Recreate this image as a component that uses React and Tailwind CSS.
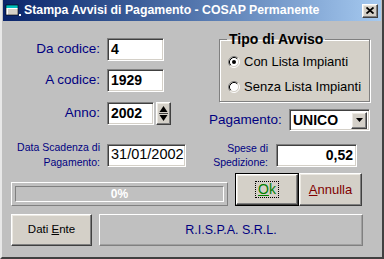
const font = { fontFamily: "'Liberation Sans', Arial, sans-serif" };

const sunken =
  "bg-white border border-t-[#808080] border-l-[#808080] border-b-white border-r-white shadow-[inset_1px_1px_0_#404040,inset_-1px_-1px_0_#d4d0c8]";
const raised =
  "bg-[#d4d0c8] border border-t-white border-l-white border-b-[#404040] border-r-[#404040] shadow-[inset_-1px_-1px_0_#808080,inset_1px_1px_0_#ece9e2]";

const Radio = ({ checked }) => (
  <svg width="12" height="12" viewBox="0 0 12 12" className="shrink-0">
    <circle cx="6" cy="6" r="4.5" fill="white" />
    <path d="M2.11 9.89 A5.5 5.5 0 0 1 9.89 2.11" fill="none" stroke="#808080" />
    <path d="M9.89 2.11 A5.5 5.5 0 0 1 2.11 9.89" fill="none" stroke="#ffffff" />
    <path d="M2.82 9.18 A4.5 4.5 0 0 1 9.18 2.82" fill="none" stroke="#000000" />
    <path d="M9.18 2.82 A4.5 4.5 0 0 1 2.82 9.18" fill="none" stroke="#d4d0c8" />
    {checked && <circle cx="6" cy="6" r="2" fill="black" />}
  </svg>
);

const Field = ({ label, value, width, bold = true }) => (
  <div className="flex items-center h-[23px]">
    <div className="w-[98px] text-right text-[13.5px] text-[#000080]">{label}</div>
    <div
      className={`${sunken} ml-[7px] h-[23px] pl-[3px] flex items-center text-[14px] text-black ${bold ? "font-bold" : ""}`}
      style={{ width }}
    >
      {value}
    </div>
  </div>
);

export default function App() {
  return (
    <div
      className="w-[384px] h-[259px] bg-[#c0c0c0] border-l-2 border-l-[#e8e8e8] border-r-2 border-r-[#404040] border-b-2 border-b-[#404040] flex flex-col overflow-hidden"
      style={font}
    >
      {/* title bar */}
      <div className="mx-[1px] h-[21px] shrink-0 bg-linear-to-r from-[#0a246a] to-[#a6caf0] flex items-center pl-[2px] pr-[3px]">
        <svg width="16" height="13" viewBox="0 0 16 13" className="shrink-0">
          <rect x="1" y="1" width="12" height="10" fill="#ffffff" />
          <rect x="1" y="1" width="12" height="3" fill="#00c0c0" />
          <rect x="3" y="5" width="10" height="6" fill="#d4d0c8" />
          <rect x="1" y="1" width="12" height="10" fill="none" stroke="#000" strokeWidth="0.6" />
          <rect x="14" y="10" width="2" height="2" fill="#ffffff" />
        </svg>
        <span className="ml-[3px] text-white font-bold text-[12.3px] leading-none whitespace-nowrap">
          Stampa Avvisi di Pagamento - COSAP Permanente
        </span>
        <div className={`${raised} ml-auto w-[16px] h-[14px] flex items-center justify-center`}>
          <svg width="8" height="7" viewBox="0 0 8 7">
            <path d="M0.5 0.5 L7.5 6.5 M7.5 0.5 L0.5 6.5" stroke="#000" strokeWidth="1.8" />
          </svg>
        </div>
      </div>

      {/* top section */}
      <div className="flex mt-[10px] items-start">
        <div className="flex flex-col pt-[7px]">
          <Field label="Da codice:" value="4" width={57} />
          <div className="mt-[8px]">
            <Field label="A codice:" value="1929" width={57} />
          </div>
          <div className="mt-[10px] flex items-center">
            <Field label="Anno:" value="2002" width={47} />
            <div className={`${raised} ml-[2px] w-[15px] h-[23px] flex items-center justify-center`}>
              <svg width="11" height="19" viewBox="0 0 11 19">
                <path d="M5.5 2 L9.5 8 L1.5 8 Z" fill="#000" />
                <line x1="1" y1="9.5" x2="10" y2="9.5" stroke="#404040" />
                <path d="M1.5 11 L9.5 11 L5.5 17 Z" fill="#000" />
              </svg>
            </div>
          </div>
        </div>

        <div className="ml-[38px] w-[161px] flex flex-col">
          <fieldset className="ml-[10px] w-[151px] h-[71px] bg-[#d4d0c8] border border-[#808080] shadow-[inset_1px_1px_0_#fff,1px_1px_0_#fff] flex flex-col">
            <legend className="ml-[7px] px-[2px] text-[14px] leading-[16px] font-bold text-black">
              Tipo di Avviso
            </legend>
            <div className="flex items-center h-[18px] mt-[6px] pl-[8px] gap-[4px] text-[13px] text-black">
              <Radio checked />
              <span>Con Lista Impianti</span>
            </div>
            <div className="flex items-center h-[18px] mt-[7px] pl-[8px] gap-[4px] text-[13px] text-black">
              <Radio />
              <span>Senza Lista Impianti</span>
            </div>
          </fieldset>
          <div className="flex items-center mt-[7px]">
            <div className="flex-1 text-[13.5px] text-[#000080]">Pagamento:</div>
            <div className={`${sunken} w-[81px] h-[22px] flex items-center pl-[3px] pr-[2px]`}>
              <span className="flex-1 font-bold text-[14px] text-black">UNICO</span>
              <div className={`${raised} w-[16px] h-[17px] flex items-center justify-center`}>
                <svg width="7" height="4" viewBox="0 0 7 4">
                  <path d="M0 0 L7 0 L3.5 4 Z" fill="#000" />
                </svg>
              </div>
            </div>
          </div>
        </div>
      </div>

      {/* dates row */}
      <div className="flex items-center mt-[9px] h-[30px]">
        <div className="w-[98px] text-right text-[10.5px] leading-[15px] text-[#000080]">
          Data Scadenza di
          <br />
          Pagamento:
        </div>
        <div className={`${sunken} ml-[7px] w-[79px] h-[23px] pl-[3px] flex items-center text-[14.5px] text-black`}>
          31/01/2002
        </div>
        <div className="w-[82px] text-right text-[10.5px] leading-[14px] text-[#000080]">
          Spese di
          <br />
          Spedizione:
        </div>
        <div className={`${sunken} ml-[8px] w-[81px] h-[23px] pr-[3px] flex items-center justify-end font-bold text-[14px] text-black`}>
          0,52
        </div>
      </div>

      {/* progress and buttons */}
      <div className="flex items-end mt-[3px] h-[33px]">
        <div className="ml-[9px] w-[217px] h-[24px] border border-t-white border-l-white border-b-[#808080] border-r-[#808080] p-[3px]">
          <div className="w-full h-full border border-t-[#808080] border-l-[#808080] border-b-white border-r-white flex items-center justify-center text-white font-bold text-[12px]">
            0%
          </div>
        </div>
        <div className="ml-[7px] w-[64px] h-[33px] border border-black">
          <div className={`${raised} w-full h-full flex items-center justify-center`}>
            <span className="border border-dotted border-black px-[2px] h-[17px] flex items-center text-[14px] text-[#008000]">
              <span className="underline">O</span>k
            </span>
          </div>
        </div>
        <div className={`${raised} w-[63px] h-[33px] flex items-center justify-center text-[13px] text-[#800000]`}>
          <span>
            <span className="underline">A</span>nnulla
          </span>
        </div>
      </div>

      {/* bottom row */}
      <div className="flex mt-[8px] h-[32px]">
        <div className={`${raised} ml-[9px] w-[81px] h-[32px] flex items-center justify-center text-[11.5px] text-black`}>
          <span>
            Dati <span className="underline">E</span>nte
          </span>
        </div>
        <div className="ml-[7px] w-[264px] h-[32px] bg-[#c0c0c0] border border-t-white border-l-white border-b-[#808080] border-r-[#808080] shadow-[inset_-1px_-1px_0_#a0a0a0] flex items-center justify-center text-[12.5px] text-[#000080]">
          R.I.S.P.A. S.R.L.
        </div>
      </div>
    </div>
  );
}
